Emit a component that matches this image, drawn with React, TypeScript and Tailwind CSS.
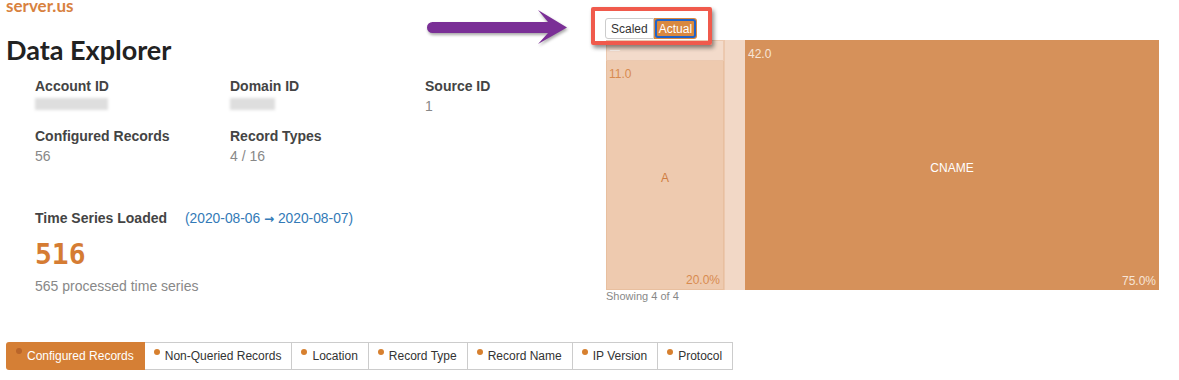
import React from "react"

function Field({ label, value }: { label: string; value: React.ReactNode }) {
  return (
    <div>
      <div className="text-[14px] leading-[17px] font-bold text-[#444]">{label}</div>
      <div className="mt-[3px] text-[14px] leading-[16px] text-[#888]">{value}</div>
    </div>
  )
}

function Blur({ w }: { w: string }) {
  return <div className={`${w} h-[12px] mt-[1px] bg-[#dedede] blur-[1.5px]`} />
}

const tabs = ["Non-Queried Records", "Location", "Record Type", "Record Name", "IP Version", "Protocol"]

function Tab({ label, active }: { label: string; active?: boolean }) {
  return (
    <button
      className={
        active
          ? "flex h-[28px] items-center pl-[10px] pr-[11px] bg-[#d57f35] text-white rounded-l-[3px]"
          : "flex h-[28px] items-center pl-[9px] pr-[10px] bg-white text-[#333] border border-[#ccc] border-l-0"
      }
    >
      <span
        className={`self-start mt-[6px] w-[6px] h-[6px] rounded-full ${active ? "bg-[#b9652a]" : "bg-[#d7802f]"}`}
      />
      <span className="ml-[5px] text-[12px] leading-[14px]">{label}</span>
    </button>
  )
}

export default function App() {
  return (
    <div className="relative w-[1179px] h-[380px] overflow-hidden bg-white font-['Liberation_Sans',Arial,sans-serif]">
      <div className="flex h-[342px]">
        {/* left column */}
        <div className="w-[606px] pl-[6px]">
          <div className="-mt-[4px] text-[17px] leading-[20px] font-bold font-['Lato',sans-serif] text-[#d8823f]">
            server.us
          </div>
          <h1 className="mt-[18px] text-[27px] leading-[32px] font-bold text-[#222] font-['Lato',sans-serif]">
            Data Explorer
          </h1>
          <div className="mt-[12px] pl-[29px] grid grid-cols-[195px_195px_195px] gap-y-[14px]">
            <Field label="Account ID" value={<Blur w="w-[73px]" />} />
            <Field label="Domain ID" value={<Blur w="w-[45px]" />} />
            <Field label="Source ID" value="1" />
            <Field label="Configured Records" value="56" />
            <Field label="Record Types" value="4 / 16" />
          </div>
          <div className="mt-[46px] pl-[29px]">
            <div className="flex items-baseline">
              <span className="w-[150px] text-[14px] leading-[17px] font-bold text-[#444]">Time Series Loaded</span>
              <span className="text-[13.8px] leading-[17px] text-[#337ab7]">
                (2020-08-06 <span className="font-['DejaVu_Sans',sans-serif] font-bold text-[12px]">→</span> 2020-08-07)
              </span>
            </div>
            <div className="mt-[11px] text-[28px] leading-[32px] font-bold font-['DejaVu_Sans_Mono',monospace] text-[#d57c33]">
              516
            </div>
            <div className="mt-[7px] text-[14px] leading-[16px] text-[#888]">565 processed time series</div>
          </div>
        </div>

        {/* right column */}
        <div className="w-[553px] pt-[18px]">
          <div className="flex h-[21px] ml-[-1px]">
            <button className="h-[21px] px-[5px] border border-[#ccc] rounded-l-[3px] bg-white text-[12px] text-[#333] leading-[14px]">
              Scaled
            </button>
            <button className="h-[21px] p-[1px] bg-[#d9883f] rounded-r-[3px]">
              <span className="flex h-full items-center px-[2px] border-2 border-[#1f62c9] rounded-[3px] text-[12px] leading-[14px] text-white">
                Actual
              </span>
            </button>
          </div>
          <div className="mt-[1px] flex h-[250px] text-[12px] leading-[14px]">
            <div className="flex w-[118px] flex-col">
              <div className="h-[21px] bg-[#f3dbcb] border border-[#ecc9b0] pl-[3px] pt-[4px] text-[10px] leading-[10px] text-white/80">
                —
              </div>
              <div className="relative flex-1 bg-[#eecaaf] border border-[#e8bf9f] border-t-0 text-[#d88a50]">
                <div className="absolute left-[2px] top-[6px]">11.0</div>
                <div className="flex h-full items-center justify-center pt-[6px] text-[#cf7d42]">A</div>
                <div className="absolute right-[3px] bottom-[2px]">20.0%</div>
              </div>
            </div>
            <div className="w-[21px] bg-[#f2d8c6] border-l border-[#ecc8ae]" />
            <div className="relative flex-1 bg-[#d6915a] text-white">
              <div className="absolute left-[3px] top-[7px] text-[#f7e5d6]">42.0</div>
              <div className="flex h-full items-center justify-center pt-[5px]">CNAME</div>
              <div className="absolute right-[3px] bottom-[2px] text-[#f7e5d6]">75.0%</div>
            </div>
          </div>
          <div className="text-[11px] leading-[13px] text-[#888]">Showing 4 of 4</div>
        </div>
      </div>

      {/* tabs */}
      <div className="flex pl-[6px]">
        <Tab label="Configured Records" active />
        {tabs.map((t) => (
          <Tab key={t} label={t} />
        ))}
      </div>

      {/* annotation overlay */}
      <div className="absolute left-[591px] top-[7px] w-[121px] h-[38px] border-4 border-[#f05a4c] rounded-[2px] shadow-[2px_3px_4px_rgba(0,0,0,0.45)] pointer-events-none" />
      <svg
        className="absolute left-0 top-0 pointer-events-none drop-shadow-[1px_2px_1.5px_rgba(0,0,0,0.35)]"
        width="1179"
        height="60"
        viewBox="0 0 1179 60"
      >
        <path d="M432.5 22 H549 V33 H432.5 A5.5 5.5 0 0 1 432.5 22 Z" fill="#7a2f96" />
        <path d="M538 10 L567 27.5 L538 44 L548 33 L548 22 Z" fill="#7a2f96" />
      </svg>
    </div>
  )
}
